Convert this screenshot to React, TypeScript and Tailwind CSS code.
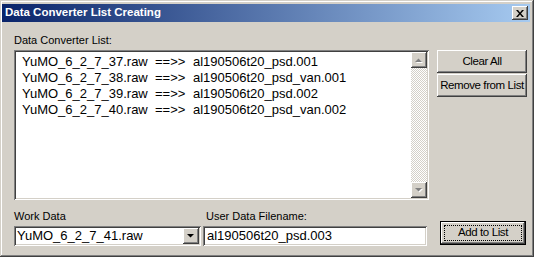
import React from "react";

type Entry = { source: string; target: string };

const entries: Entry[] = [
  { source: "YuMO_6_2_7_37.raw", target: "al190506t20_psd.001" },
  { source: "YuMO_6_2_7_38.raw", target: "al190506t20_psd_van.001" },
  { source: "YuMO_6_2_7_39.raw", target: "al190506t20_psd.002" },
  { source: "YuMO_6_2_7_40.raw", target: "al190506t20_psd_van.002" },
];

// classic 3d edges
const raised =
  "shadow-[inset_-1px_-1px_#404040,inset_1px_1px_#ffffff,inset_-2px_-2px_#808080,inset_2px_2px_#d4d0c8]";
const sunken =
  "shadow-[inset_1px_1px_#808080,inset_-1px_-1px_#ffffff,inset_2px_2px_#404040,inset_-2px_-2px_#d4d0c8]";

function Arrow({ up, disabled }: { up?: boolean; disabled?: boolean }) {
  const pts = up ? "0,4 3.5,0.5 7,4" : "0,0 7,0 3.5,3.5";
  return (
    <svg width="8" height="5" viewBox="0 0 8 5">
      {disabled && <polygon points={pts} fill="#ffffff" transform="translate(1,1)" />}
      <polygon points={pts} fill={disabled ? "#808080" : "#000000"} />
    </svg>
  );
}

function PushButton({ label }: { label: string }) {
  return (
    <button
      className={`w-[90px] h-[23px] bg-[#d4d0c8] ${raised} text-[11.5px] tracking-[-0.4px] text-black flex items-center justify-center`}
    >
      {label}
    </button>
  );
}

export default function App() {
  return (
    <div
      className="w-[534px] h-[257px] bg-[#d4d0c8] flex flex-col pt-[4px] pl-[2px] pr-[4px] pb-[4px] shadow-[inset_-1px_-1px_#404040,inset_1px_1px_#d4d0c8,inset_-2px_-2px_#808080,inset_2px_2px_#ffffff] overflow-hidden"
      style={{ fontFamily: '"Liberation Sans", Arial, sans-serif' }}
    >
      {/* title bar */}
      <div className="h-[18px] flex items-center justify-between pl-[3px] pr-[2px] bg-[linear-gradient(90deg,#0a246a,#a6caf0)]">
        <span className="text-white font-bold text-[11.5px] leading-none">
          Data Converter List Creating
        </span>
        <button className={`w-[16px] h-[14px] bg-[#d4d0c8] ${raised} flex items-center justify-center`}>
          <svg width="8" height="7" viewBox="0 0 8 7">
            <path d="M0 0h2l2 2.5L6 0h2L5 3.5 8 7H6L4 4.5 2 7H0l3-3.5z" fill="#000" />
          </svg>
        </button>
      </div>

      <div className="flex-1 flex flex-col pl-[12px]">
        {/* list section */}
        <div className="flex gap-[8px]">
          <div className="w-[415px] flex flex-col">
            <div className="mt-[11px] h-[14px] mb-[3px] text-[11px] leading-[14px] text-black">
              Data Converter List:
            </div>
            <div className={`h-[150px] bg-white ${sunken} p-[2px] flex`}>
              <div className="flex-1 pt-[2px] pl-[6px] text-[13px] text-black">
                {entries.map((e) => (
                  <div key={e.source} className="h-[16px] leading-[16px] flex whitespace-nowrap">
                    <span className="w-[133px]">{e.source}</span>
                    <span className="w-[38px]">==&gt;&gt;</span>
                    <span>{e.target}</span>
                  </div>
                ))}
              </div>
              <div className="w-[16px] flex flex-col bg-[repeating-conic-gradient(#d4d0c8_0_25%,#ffffff_0_50%)] bg-[length:2px_2px]">
                <div className={`h-[16px] bg-[#d4d0c8] ${raised} flex items-center justify-center`}>
                  <Arrow up disabled />
                </div>
                <div className="flex-1" />
                <div className={`h-[16px] bg-[#d4d0c8] ${raised} flex items-center justify-center`}>
                  <Arrow disabled />
                </div>
              </div>
            </div>
          </div>
          <div className="mt-[28px] flex flex-col gap-[1px]">
            <PushButton label="Clear All" />
            <PushButton label="Remove from List" />
          </div>
        </div>

        {/* bottom controls */}
        <div className="mt-[8px] flex items-start">
          <div className="w-[187px] flex flex-col">
            <div className="h-[16px] text-[11px] leading-[16px] text-black">Work Data</div>
            <div className={`mt-[2px] h-[20px] bg-white ${sunken} p-[2px] flex items-center`}>
              <span className="flex-1 pl-[1px] text-[13px] leading-[16px] text-black">
                YuMO_6_2_7_41.raw
              </span>
              <div className={`w-[16px] h-[16px] bg-[#d4d0c8] ${raised} flex items-center justify-center`}>
                <Arrow />
              </div>
            </div>
          </div>
          <div className="ml-[2px] w-[224px] flex flex-col">
            <div className="h-[16px] pl-[3px] text-[11px] leading-[16px] text-black">
              User Data Filename:
            </div>
            <div className={`mt-[2px] h-[20px] bg-white ${sunken} px-[4px] flex items-center`}>
              <span className="text-[13px] leading-[16px] text-black">al190506t20_psd.003</span>
            </div>
          </div>
          <button className="ml-[13px] mt-[13px] w-[86px] h-[24px] border border-black bg-[#d4d0c8] p-0">
            <div className={`w-full h-full ${raised} p-[3px]`}>
              <div className="w-full h-full border border-dotted border-black flex items-center justify-center text-[11.5px] tracking-[-0.4px] text-black">
                Add to List
              </div>
            </div>
          </button>
        </div>
      </div>
    </div>
  );
}
